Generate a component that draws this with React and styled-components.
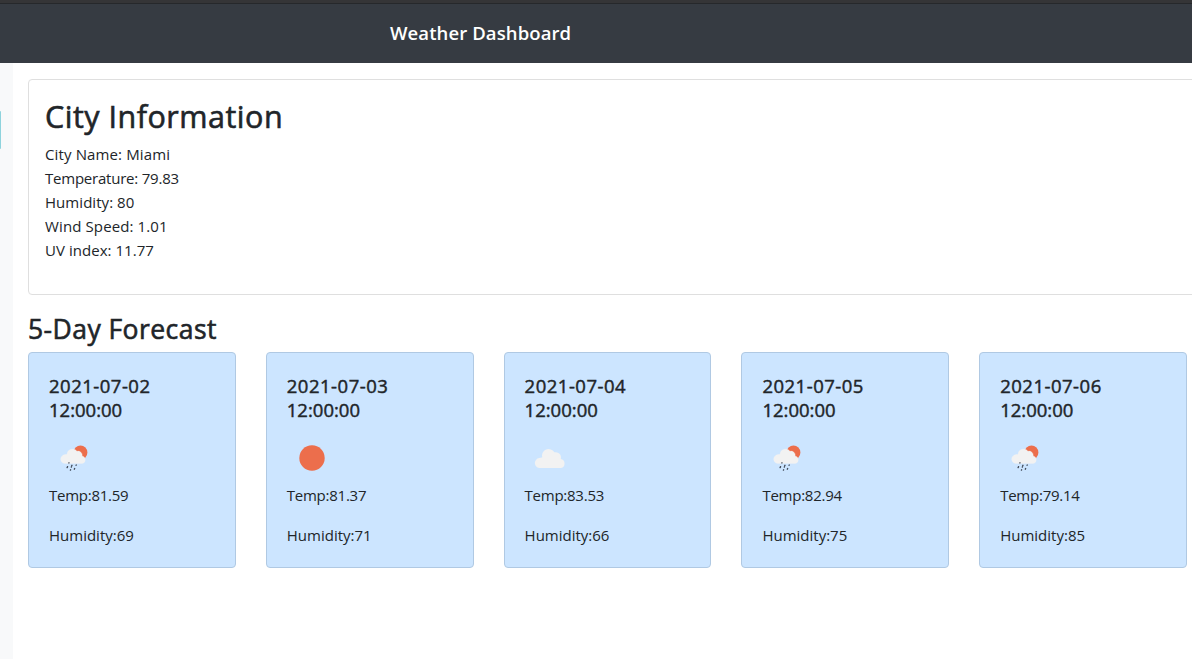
import React from "react";
import styled, { createGlobalStyle } from "styled-components";

const GlobalStyle = createGlobalStyle`
  *, *::before, *::after { box-sizing: border-box; }
  html, body { margin: 0; height: 100%; overflow: hidden; background: #fff; }
  body {
    color: #212529;
    font: 400 16px/24px "Segoe UI", "Open Sans", "Noto Sans", sans-serif;
  }
  #root { height: 100%; }
  h1, h2, h3, h5, p { margin: 0; }
`;

const Page = styled.div`
  display: flex;
  flex-direction: column;
  height: 100vh;
  overflow: hidden;
`;

const Header = styled.header`
  flex: none;
  height: 63px;
  padding: 18px 0 0 390px;
  background: linear-gradient(#353537 0 3px, #26282b 3px 4px, #363b42 4px);
  color: #fff;
`;

const Fit = styled.span`
  display: block;
  white-space: nowrap;
  font-size: ${(p) => p.$size}px;
  letter-spacing: ${(p) => p.$track || 0}px;
`;

const Brand = styled.h1`
  font-size: 18px;
  font-weight: 600;
  line-height: 30px;
`;

const Body = styled.div`
  display: flex;
  flex: 1;
  min-height: 0;
`;

const Sidebar = styled.aside`
  flex: none;
  width: 13px;
  padding-top: 48px;
  background: #f8f9fa;
`;

const SearchEdge = styled.div`
  width: 1px;
  height: 38px;
  background: #8ed3dd;
  border-radius: 0 1px 1px 0;
`;

const Main = styled.main`
  flex: none;
  width: 1200px;
  padding: 16px 0 0 15px;
`;

const CityCard = styled.section`
  height: 216px;
  padding: 16px;
  border: 1px solid #dfdfdf;
  border-radius: 4px;
`;

const CityTitle = styled.h2`
  margin-bottom: 6px;
  font-weight: 400;
  -webkit-text-stroke: 0.6px currentColor;
  line-height: 40.4px;
`;

const ForecastTitle = styled.h3`
  margin: 16px 0 5px;
  font-weight: 400;
  -webkit-text-stroke: 0.6px currentColor;
  line-height: 36px;
`;

const Forecast = styled.div`
  display: grid;
  grid-template-columns: repeat(5, 1fr);
  column-gap: 30px;
  width: 1159px;
`;

const DayCard = styled.article`
  height: 216px;
  padding: 20px;
  background: #cce5ff;
  border: 1px solid #b0c9e3;
  border-radius: 4px;
`;

const DayTitle = styled.h5`
  display: flex;
  flex-direction: column;
  padding-top: 1px;
  margin-bottom: 11px;
  font-weight: 400;
  -webkit-text-stroke: 0.45px currentColor;
  line-height: 24px;
`;

const Icon = styled.svg`
  display: block;
  width: 50px;
  height: 50px;
`;

const Line = styled.p`
  height: 24px;
  line-height: 24px;
  margin-bottom: ${(p) => p.$gap || 0}px;
`;

function WeatherIcon({ kind }) {
  if (kind === "sun") {
    return <Icon viewBox="0 0 50 50"><circle cx="25" cy="25" r="12.7" fill="#ec6e4c" /></Icon>;
  }
  if (kind === "cloud") {
    return (
      <Icon viewBox="0 0 50 50">
        <path fill="#f2f2f2" d="M15.300 35a4.800 4.800 0 0 1-1-9.900 5 5 0 0 1 2.900-.6 6.700 6.700 0 0 1 12.200-5.200 5.400 5.400 0 0 1 6.400 6.700 4.600 4.600 0 0 1 .2 9z" />
      </Icon>
    );
  }
  return (
    <Icon viewBox="0 0 50 50">
      <circle cx="31.500" cy="19.500" r="6.900" fill="#ec6e4c" />
      <path fill="#f2f2f2" stroke="#f2f2f2" strokeWidth=".3" d="M16.500 30.600a4.500 4.500 0 0 1-.6-9 4 4 0 0 1 2.100-.2 5.600 5.600 0 0 1 10-3.200 4.200 4.200 0 0 1 5.200 4.700 4 4 0 0 1 .2 7.700z" />
      <path stroke="#3f4754" strokeWidth="1.350" fill="none" strokeLinecap="round" d="M20 29.800l-.1.200M23 32.300l-.3.600M27.300 32l-.3.200M18.600 33.600l-.5 1M25.700 35.500l-.4.700M21.600 36.800l-.2.300M22.400 33.900l-.1.200" />
    </Icon>
  );
}

const cityLines = [
  ["City Name: Miami", 0.13],
  ["Temperature: 79.83", -0.22],
  ["Humidity: 80", 0.05],
  ["Wind Speed: 1.01", 0.12],
  ["UV index: 11.77", 0.04],
];

const days = [
  { date: "2021-07-02", icon: "rain", temp: "81.59", humidity: 69 },
  { date: "2021-07-03", icon: "sun", temp: "81.37", humidity: 71 },
  { date: "2021-07-04", icon: "cloud", temp: "83.53", humidity: 66 },
  { date: "2021-07-05", icon: "rain", temp: "82.94", humidity: 75 },
  { date: "2021-07-06", icon: "rain", temp: "79.14", humidity: 85 },
];

export default function App() {
  return (
    <Page>
      <GlobalStyle />
      <Header>
        <Brand><Fit $size={18.5} $track={0.1}>Weather Dashboard</Fit></Brand>
      </Header>
      <Body>
        <Sidebar><SearchEdge /></Sidebar>
        <Main>
          <CityCard>
            <CityTitle><Fit $size={30.5} $track={0.5}>City Information</Fit></CityTitle>
            {cityLines.map(([text, track]) => (
              <Line key={text}><Fit $size={15} $track={track}>{text}</Fit></Line>
            ))}
          </CityCard>
          <ForecastTitle><Fit $size={26.5} $track={0.45}>5-Day Forecast</Fit></ForecastTitle>
          <Forecast>
            {days.map((d) => (
              <DayCard key={d.date}>
                <DayTitle>
                  <Fit $size={18.5} $track={0.5}>{d.date}</Fit>
                  <Fit $size={18.5}>12:00:00</Fit>
                </DayTitle>
                <WeatherIcon kind={d.icon} />
                <Line $gap={16}><Fit $size={15} $track={-0.25}>Temp:{d.temp}</Fit></Line>
                <Line><Fit $size={15}>Humidity:{d.humidity}</Fit></Line>
              </DayCard>
            ))}
          </Forecast>
        </Main>
      </Body>
    </Page>
  );
}
